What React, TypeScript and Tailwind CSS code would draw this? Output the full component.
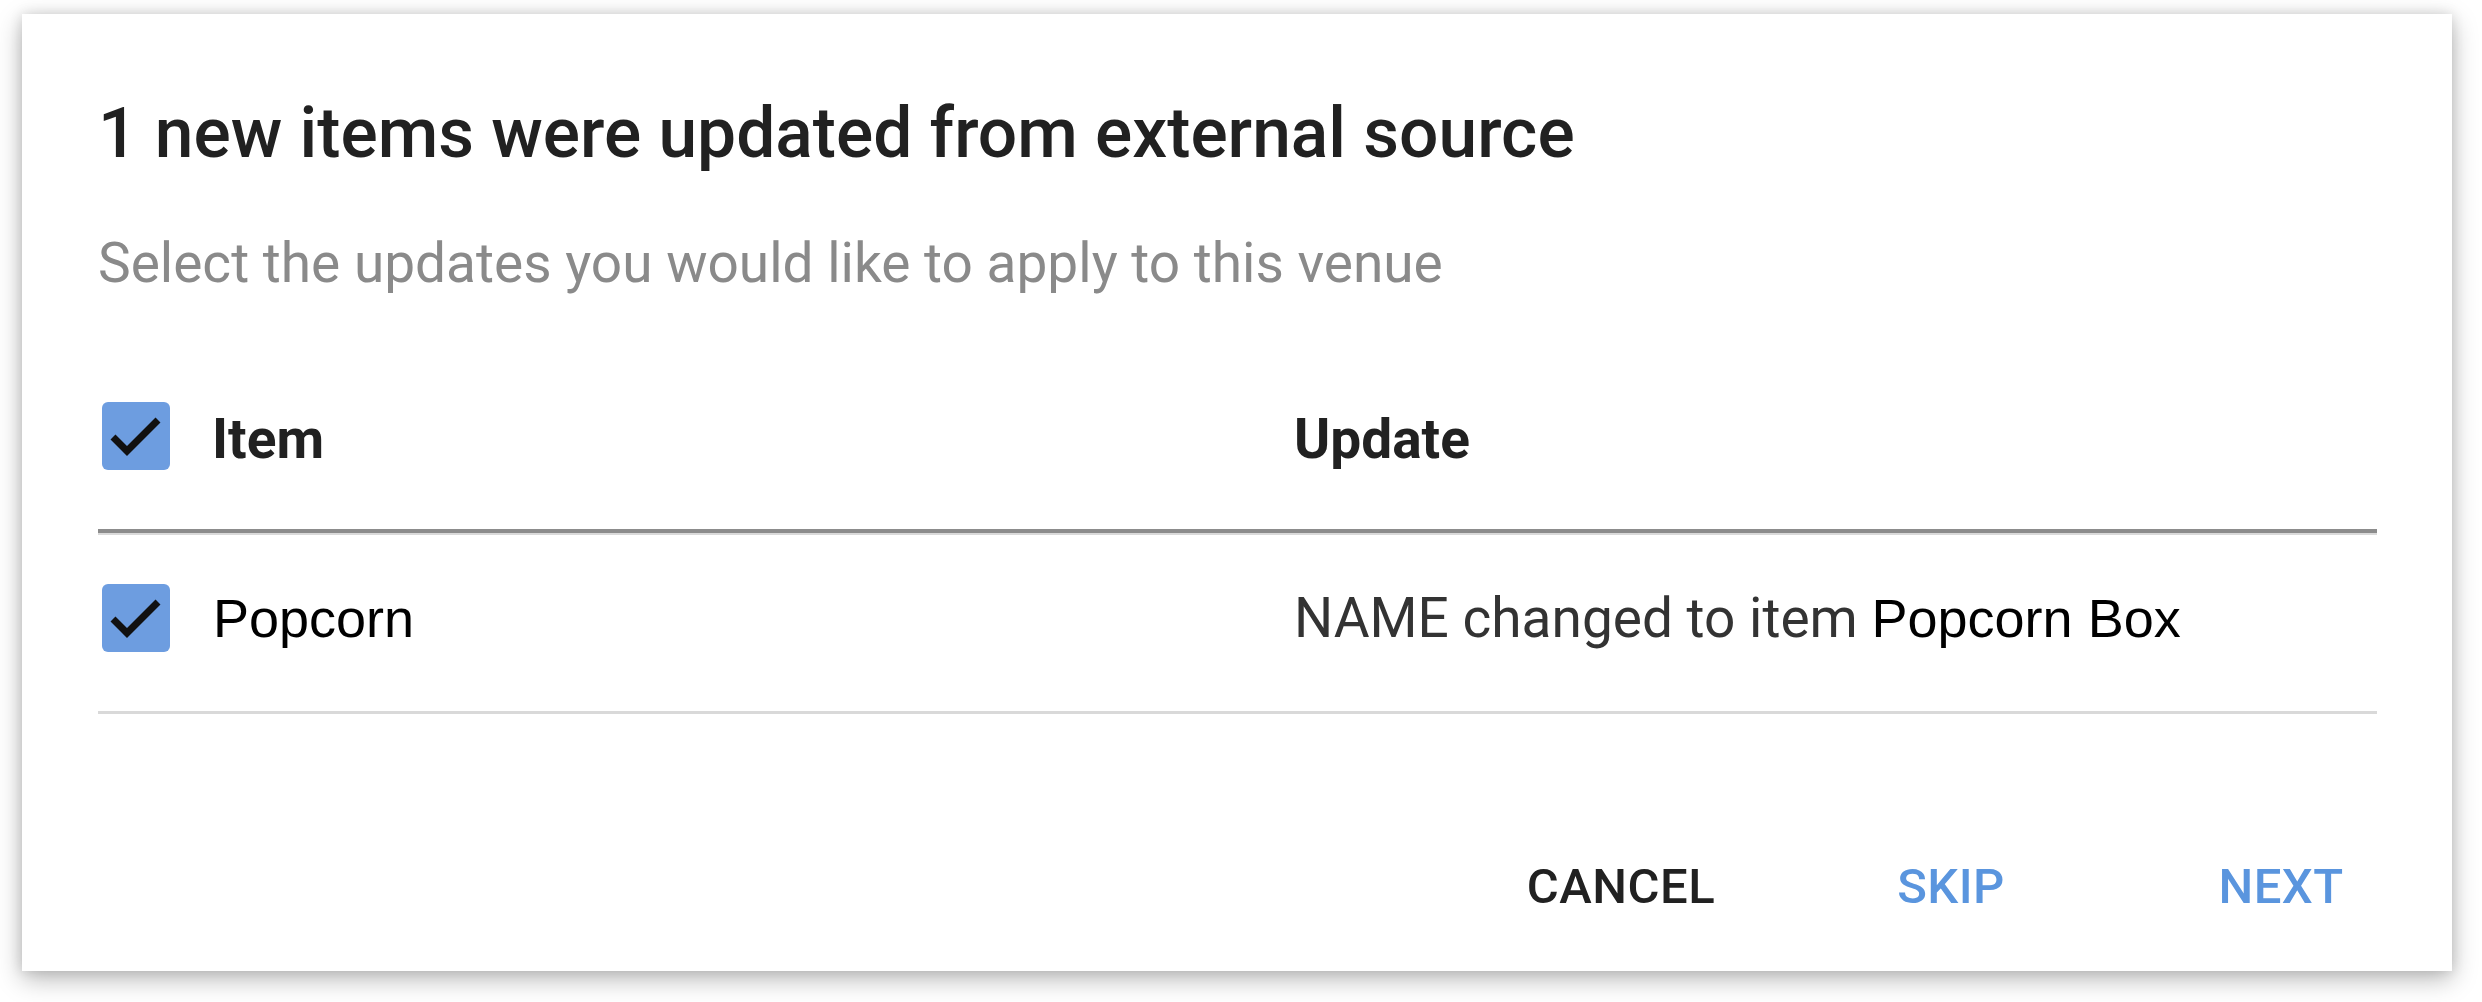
import React from 'react';

const roboto = { fontFamily: 'Roboto, "Liberation Sans", sans-serif' };
const arial = { fontFamily: '"Liberation Sans", Arial, sans-serif' };

function Check() {
  return (
    <div className="grid h-[68px] w-[68px] shrink-0 place-items-center rounded-[6px] bg-[#6d9de0]">
      <svg viewBox="0 0 68 68" className="h-[68px] w-[68px]">
        <polyline points="11,35 25,49 56,18" fill="none" stroke="#111" strokeWidth="7" />
      </svg>
    </div>
  );
}

export default function App() {
  return (
    <div className="h-[1002px] w-full bg-white pl-[22px] pt-[14px]" style={roboto}>
      <div className="flex h-[957px] w-[2430px] flex-col bg-white shadow-[0_8px_24px_rgba(0,0,0,0.28),0_0_12px_rgba(0,0,0,0.12)]">
        <div className="pl-[76px] pr-[75px] pt-[79px]">
          <h1 className="text-[69.5px] font-medium leading-[82px] text-[#212121]">
            1 new items were updated from external source
          </h1>
          <p className="mt-[56px] text-[55px] leading-[64px] text-[#8a8a8a]">
            Select the updates you would like to apply to this venue
          </p>

          {/* table */}
          <div className="mt-[74px]">
            <div className="grid grid-cols-[1196px_1fr] items-center border-b-[4px] border-[#8c8c8c] pb-[58px] pt-[32px] shadow-[0_2px_0_#dadada]">
              <div className="flex items-center gap-[42px] pl-[4px]">
                <Check />
                <span className="pt-[6px] text-[55px] font-bold leading-[64px] text-[#212121]">Item</span>
              </div>
              <span className="pt-[6px] text-[55px] font-bold leading-[64px] text-[#212121]">Update</span>
            </div>
            <div className="grid grid-cols-[1196px_1fr] items-center border-b-[3px] border-[#d9d9d9] pb-[59px] pt-[51px]">
              <div className="flex items-center gap-[43px] pl-[4px]">
                <Check />
                <span className="text-[54px] leading-[64px] text-black" style={arial}>Popcorn</span>
              </div>
              <span className="text-[55px] leading-[64px] text-[#333]">
                NAME changed to item{' '}
                <span className="text-[54px] text-black" style={arial}>Popcorn Box</span>
              </span>
            </div>
          </div>
        </div>

        {/* actions */}
        <div className="mt-[144px] flex justify-end gap-[50px] pr-[31px] text-[49px] font-medium leading-[58px] tracking-[0.01em]">
          <button className="w-[280px] text-center text-[#212121]">CANCEL</button>
          <button className="w-[280px] text-center text-[#5a95de]">SKIP</button>
          <button className="w-[280px] text-center text-[#5a95de]">NEXT</button>
        </div>
      </div>
    </div>
  );
}
